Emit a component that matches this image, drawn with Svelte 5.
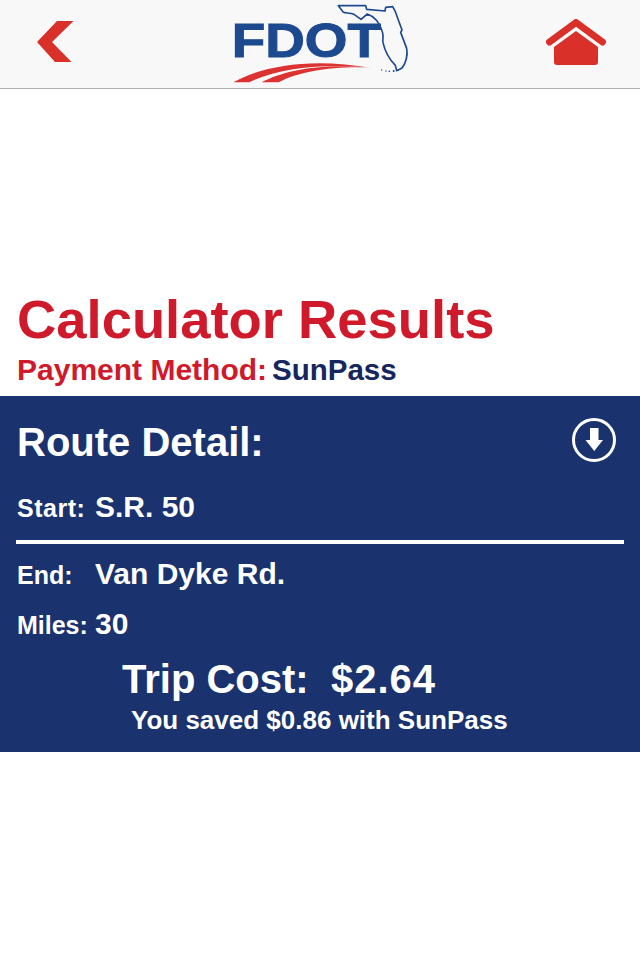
<script>
  const rows = [
    { label: 'End:', value: 'Van Dyke Rd.' },
    { label: 'Miles:', value: '30' }
  ];
</script>

<div class="page">
  <header class="bar">
    <button class="icon back" aria-label="Back">
      <svg viewBox="0 0 37 41" width="37" height="41"><path d="M0 21 L20 0 H36.500 L15 21 L34.500 41 H18 Z" fill="#d9302a"/></svg>
    </button>
    <svg class="logo" viewBox="0 0 600 270" width="200" height="90" role="img" aria-label="FDOT">
      <text x="35" y="172" class="fdot" textLength="448" lengthAdjust="spacingAndGlyphs">FDOT</text>
      <path d="M355 17 L437 17 L440 28 L495 33 L497 22 L518 20 L526 35 L546 90 L542 97 L560 145 C564 165 558 190 545 205 L530 212 L526 196 C510 180 495 155 489 128 C487 115 492 110 487 95 C480 72 465 50 442 42 L423 58 L402 43 C390 38 378 40 370 37 Z" fill="none" stroke="#1d4a8f" stroke-width="5" stroke-linejoin="round"/>
      <path d="M40 247 C120 200 270 170 455 204 C340 190 180 200 88 247 Z" fill="#dc3232"/>
      <path d="M125 247 C190 212 300 190 440 202 C340 198 230 215 176 247 Z" fill="#dc3232"/>
      <g fill="#1d4a8f"><circle cx="485" cy="210" r="2"/><circle cx="498" cy="213" r="2"/><circle cx="508" cy="214" r="2.500"/><circle cx="521" cy="213" r="3"/></g>
    </svg>
    <button class="icon home" aria-label="Home">
      <svg viewBox="0 0 60 46" width="60" height="46">
        <path d="M3.500 23 L30 3.500 L56.500 23" fill="none" stroke="#d9302a" stroke-width="7" stroke-linecap="round" stroke-linejoin="round"/>
        <path d="M30 12 L52 28 V43 Q52 46 49 46 H11 Q8 46 8 43 V28 Z" fill="#d9302a"/>
      </svg>
    </button>
  </header>

  <main>
    <section class="intro">
      <h1>Calculator Results</h1>
      <p class="method"><span class="method-label">Payment Method:</span><span class="method-value">SunPass</span></p>
    </section>

    <section class="panel">
      <div class="panel-head">
        <h2>Route Detail:</h2>
        <svg viewBox="0 0 44 44" width="44" height="44" aria-hidden="true">
          <circle cx="22" cy="22" r="20.500" fill="none" stroke="#fff" stroke-width="3"/>
          <path d="M18 10 H26.500 V22 H31 L22.250 33 L13.500 22 H18 Z" fill="#fff"/>
        </svg>
      </div>
      <div class="row start"><span class="label">Start:</span><span class="value">S.R. 50</span></div>
      <hr />
      {#each rows as row}
        <div class="row"><span class="label">{row.label}</span><span class="value">{row.value}</span></div>
      {/each}
      <div class="cost">Trip Cost:&nbsp; <span class="amount">$2.64</span></div>
      <div class="saved">You saved $0.86 with SunPass</div>
    </section>
  </main>
</div>

<style>
  :global(body) {
    margin: 0;
    background: #fff;
    font-family: "Liberation Sans", Arial, sans-serif;
  }
  .page {
    width: 640px;
    height: 960px;
    overflow: hidden;
    background: #fff;
  }
  .bar {
    box-sizing: border-box;
    height: 89px;
    background: #f8f8f8;
    border-bottom: 1px solid #b2b2b2;
    display: grid;
    grid-template-columns: 1fr auto 1fr;
    align-items: start;
    padding: 0 34px 0 37px;
  }
  .icon {
    background: none;
    border: 0;
    padding: 0;
    display: block;
  }
  .icon svg { display: block; }
  .back { margin-top: 21px; justify-self: start; }
  .home { margin-top: 19px; justify-self: end; }
  .logo { display: block; margin-left: -3px; }
  .fdot {
    font-family: "Liberation Sans", Arial, sans-serif;
    font-weight: 700;
    font-size: 142px;
    fill: #1d4a8f;
    stroke: #1d4a8f;
    stroke-width: 3px;
  }
  .intro {
    padding: 201px 17px 0;
    height: 106px;
  }
  h1 {
    margin: 0;
    font-size: 54.4px;
    line-height: 60px;
    font-weight: 700;
    color: #cf1a2b;
  }
  .method {
    margin: 3px 0 0;
    font-size: 30px;
    line-height: 34px;
    font-weight: 700;
    display: flex;
    gap: 5px;
  }
  .method-label { color: #cf1a2b; }
  .method-value { color: #16265f; font-size: 29.5px; }
  .panel {
    box-sizing: border-box;
    height: 356px;
    background: #1a326e;
    color: #fff;
    font-weight: 700;
    padding: 0 16px;
  }
  .panel-head {
    height: 92px;
    display: flex;
    align-items: flex-start;
    justify-content: space-between;
    padding: 22px 8px 0 1px;
    box-sizing: border-box;
  }
  h2 {
    margin: 0;
    font-size: 40px;
    line-height: 48px;
    font-weight: 700;
  }
  .row {
    display: flex;
    align-items: baseline;
    height: 50px;
    padding-left: 1px;
  }
  .row.start { height: 51px; padding-top: 1px; }
  .row.start .label { letter-spacing: 0.5px; }
  .label {
    width: 78px;
    font-size: 25px;
    line-height: 36px;
  }
  .value {
    font-size: 30px;
    line-height: 36px;
  }
  hr {
    border: 0;
    height: 4px;
    background: #fff;
    margin: 0 0 12px;
  }
  .cost {
    margin: -2px 0 0 106px;
    font-size: 40px;
    line-height: 50px;
  }
  .amount { letter-spacing: 1px; }
  .saved {
    margin: 1px 0 0 115px;
    font-size: 26px;
    line-height: 30px;
  }
</style>
